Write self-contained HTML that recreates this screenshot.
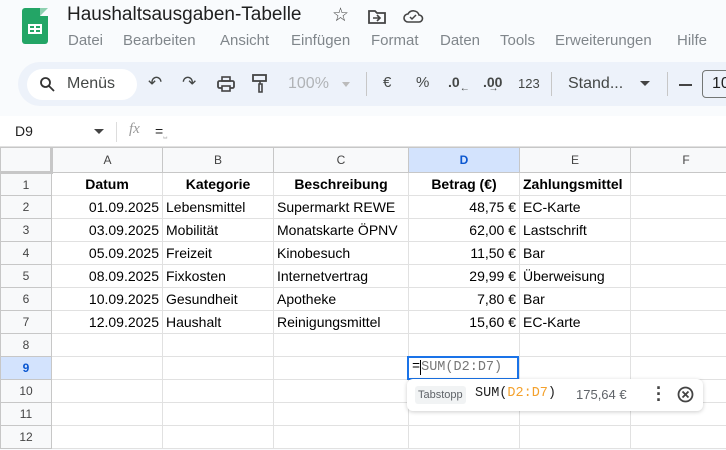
<!DOCTYPE html>
<html><head><meta charset="utf-8"><style>
*{box-sizing:border-box;margin:0;padding:0}
body{width:726px;height:450px;overflow:hidden;background:#f9fbfd;font-family:"Liberation Sans",Arial,sans-serif;position:relative}
.abs{position:absolute}
.title{left:67px;top:4px;font-size:19px;color:#1f1f1f}
.menu{top:32px;font-size:15px;color:#80868b}
.tb{left:18px;top:62px;width:740px;height:44px;background:#edf2fa;border-radius:22px}
.ic{color:#444746;font-size:15px;top:74px}
.fbar{left:0;top:116px;width:726px;height:31px;background:#fff;border-bottom:1px solid #e1e1e1}
table{position:absolute;left:0;top:147px;width:741px;border-collapse:collapse;table-layout:fixed;background:#fff;font-size:14px;color:#000}
td{border:1px solid #e1e1e1;height:23px;padding:0 3px;white-space:nowrap;overflow:hidden}
tr.h td{height:25px;background:#f8f9fa;text-align:center;color:#444;font-size:12px;border-color:#c7c7c7}
td.rh{background:#f8f9fa;text-align:center;color:#444;font-size:12px;border-color:#c7c7c7}
.r{text-align:right}.c{text-align:center}.b{font-weight:bold}
</style></head><body>
<div class="abs" style="left:22px;top:8px;width:26px;height:36px;background:#23a566;border-radius:3px"></div>
<div class="abs" style="left:40px;top:8px;width:0;height:0;border-left:8px solid #8ed1b1;border-bottom:8px solid #f9fbfd"></div>
<div class="abs" style="left:28px;top:24px;width:14px;height:10px;border:2px solid #fff;background:linear-gradient(#fff,#fff) center/2px 100% no-repeat,linear-gradient(#fff,#fff) center/100% 2px no-repeat"></div>
<div class="abs title">Haushaltsausgaben-Tabelle</div>
<div class="abs" style="left:332px;top:4px;font-size:19px;color:#444">☆</div>
<svg class="abs" style="left:367px;top:9px" width="20" height="16" viewBox="0 0 20 16"><path d="M2 2h6l2 2h8v10H2z" fill="none" stroke="#444" stroke-width="1.8"/><path d="M6 9h7M10 6l3 3-3 3" fill="none" stroke="#444" stroke-width="1.6"/></svg>
<svg class="abs" style="left:402px;top:8px" width="22" height="16" viewBox="0 0 22 16"><path d="M6 14a4 4 0 0 1 0-8 6 6 0 0 1 11 1 3.5 3.5 0 0 1 0 7z" fill="none" stroke="#444" stroke-width="1.6"/><path d="M8 9l2 2 4-4" fill="none" stroke="#444" stroke-width="1.5"/></svg>
<div class="abs menu" style="left:68px">Datei</div><div class="abs menu" style="left:123px">Bearbeiten</div><div class="abs menu" style="left:220px">Ansicht</div><div class="abs menu" style="left:291px">Einfügen</div><div class="abs menu" style="left:371px">Format</div><div class="abs menu" style="left:440px">Daten</div><div class="abs menu" style="left:500px">Tools</div><div class="abs menu" style="left:555px">Erweiterungen</div><div class="abs menu" style="left:677px">Hilfe</div>
<div class="abs tb"></div>
<div class="abs" style="left:27px;top:69px;width:110px;height:31px;background:#fff;border-radius:16px"></div>
<svg class="abs" style="left:39px;top:76px" width="16" height="16" viewBox="0 0 16 16"><circle cx="6.5" cy="6.5" r="4.5" fill="none" stroke="#333" stroke-width="1.8"/><path d="M10 10l5 5" stroke="#333" stroke-width="1.8"/></svg>
<div class="abs ic" style="left:67px;font-size:16px;top:75px">Menüs</div>
<div class="abs ic" style="left:148px;font-size:17px;top:73px">↶</div>
<div class="abs ic" style="left:182px;font-size:17px;top:73px">↷</div>
<svg class="abs" style="left:217px;top:76px" width="18" height="16" viewBox="0 0 18 16"><rect x="1" y="5" width="16" height="7" rx="1.5" fill="none" stroke="#444" stroke-width="1.8"/><rect x="5" y="1" width="8" height="4" fill="none" stroke="#444" stroke-width="1.6"/><rect x="5" y="10" width="8" height="5" fill="#edf2fa" stroke="#444" stroke-width="1.6"/></svg>
<svg class="abs" style="left:252px;top:74px" width="16" height="20" viewBox="0 0 16 20"><rect x="1" y="1" width="13" height="6" fill="none" stroke="#444" stroke-width="1.8"/><path d="M8 7v3H7v8h3v-8H8" fill="none" stroke="#444" stroke-width="1.6"/></svg>
<div class="abs ic" style="left:288px;color:#b0b3b6;font-size:16px;top:75px">100%</div>
<div class="abs" style="left:342px;top:82px;border:4px solid transparent;border-top:5px solid #bbb"></div>
<div class="abs" style="left:366px;top:72px;width:1px;height:24px;background:#c7c7c7"></div>
<div class="abs ic" style="left:383px">€</div>
<div class="abs ic" style="left:416px">%</div>
<div class="abs ic" style="left:448px;font-weight:bold;font-size:14px">.0<sub style="font-size:10px">←</sub></div>
<div class="abs ic" style="left:483px;font-weight:bold;font-size:14px">.00<sub style="font-size:10px;margin-left:-14px">→</sub></div>
<div class="abs ic" style="left:518px;font-size:13px;top:76px">123</div>
<div class="abs" style="left:551px;top:72px;width:1px;height:24px;background:#c7c7c7"></div>
<div class="abs ic" style="left:568px;font-size:16px;top:75px">Stand...</div>
<div class="abs" style="left:640px;top:81px;border:5px solid transparent;border-top:5px solid #444"></div>
<div class="abs" style="left:667px;top:72px;width:1px;height:24px;background:#c7c7c7"></div>
<div class="abs" style="left:679px;top:84px;width:13px;height:2px;background:#444"></div>
<div class="abs" style="left:702px;top:70px;width:40px;height:28px;border:1px solid #747775;border-radius:4px;font-size:16px;padding:4px 0 0 9px;color:#1f1f1f">10</div>
<div class="abs fbar"></div>
<div class="abs" style="left:15px;top:123px;font-size:14px;color:#1f1f1f">D9</div>
<div class="abs" style="left:94px;top:129px;border:5px solid transparent;border-top:5px solid #444"></div>
<div class="abs" style="left:116px;top:122px;width:1px;height:20px;background:#ddd"></div>
<div class="abs" style="left:129px;top:121px;font-size:15px;color:#999;font-style:italic;font-family:'Liberation Serif',serif">fx</div>
<div class="abs" style="left:155px;top:123px;font-size:14px;color:#1f1f1f">=<span style="color:#bbb;font-size:10px">⎵</span></div>
<table>
<colgroup><col style="width:51px"><col style="width:111px"><col style="width:111px"><col style="width:135px"><col style="width:111px"><col style="width:111px"><col style="width:111px"></colgroup>
<tr class="h"><td style="border-bottom:3px solid #c7c7c7;border-right:3px solid #c7c7c7"></td><td>A</td><td>B</td><td>C</td><td style="background:#d3e3fd;color:#0b57d0;font-weight:bold">D</td><td>E</td><td>F</td></tr>
<tr><td class="rh">1</td><td class="c b">Datum</td><td class="c b">Kategorie</td><td class="c b">Beschreibung</td><td class="c b">Betrag (€)</td><td class="b">Zahlungsmittel</td><td></td></tr>
<tr><td class="rh">2</td><td class="r">01.09.2025</td><td>Lebensmittel</td><td>Supermarkt REWE</td><td class="r">48,75 €</td><td>EC-Karte</td><td></td></tr>
<tr><td class="rh">3</td><td class="r">03.09.2025</td><td>Mobilität</td><td>Monatskarte ÖPNV</td><td class="r">62,00 €</td><td>Lastschrift</td><td></td></tr>
<tr><td class="rh">4</td><td class="r">05.09.2025</td><td>Freizeit</td><td>Kinobesuch</td><td class="r">11,50 €</td><td>Bar</td><td></td></tr>
<tr><td class="rh">5</td><td class="r">08.09.2025</td><td>Fixkosten</td><td>Internetvertrag</td><td class="r">29,99 €</td><td>Überweisung</td><td></td></tr>
<tr><td class="rh">6</td><td class="r">10.09.2025</td><td>Gesundheit</td><td>Apotheke</td><td class="r">7,80 €</td><td>Bar</td><td></td></tr>
<tr><td class="rh">7</td><td class="r">12.09.2025</td><td>Haushalt</td><td>Reinigungsmittel</td><td class="r">15,60 €</td><td>EC-Karte</td><td></td></tr>
<tr><td class="rh">8</td><td></td><td></td><td></td><td></td><td></td><td></td></tr>
<tr><td class="rh" style="background:#d3e3fd;color:#0b57d0;font-weight:bold">9</td><td></td><td></td><td></td><td></td><td></td><td></td></tr>
<tr><td class="rh">10</td><td></td><td></td><td></td><td></td><td></td><td></td></tr>
<tr><td class="rh">11</td><td></td><td></td><td></td><td></td><td></td><td></td></tr>
<tr><td class="rh">12</td><td></td><td></td><td></td><td></td><td></td><td></td></tr>
</table>
<div class="abs" style="left:407px;top:356px;width:112px;height:24px;border:2px solid #1a73e8;background:#fff;font-family:'Liberation Mono',monospace;font-size:13.5px;color:#777;padding:2px 0 0 3px"><span style="color:#000">=</span><span style="border-left:1px solid #000"></span>SUM(D2:D7)</div>
<div class="abs" style="left:407px;top:379px;width:296px;height:32px;background:#fff;border-radius:6px;box-shadow:0 1px 4px rgba(0,0,0,.2)"></div>
<div class="abs" style="left:415px;top:386px;height:18px;background:#f1f3f4;border-radius:3px;font-size:11px;color:#5f6368;padding:3px 3px">Tabstopp</div>
<div class="abs" style="left:475px;top:386px;font-family:'Liberation Mono',monospace;font-size:13.5px;color:#1f1f1f">SUM(<span style="color:#f4a12c">D2:D7</span>)</div>
<div class="abs" style="left:576px;top:387px;font-size:13px;color:#5f6368">175,64 €</div>
<div class="abs" style="left:656px;top:385px;font-size:18px;font-weight:bold;color:#444;line-height:6px;width:4px">·<br>·<br>·</div>
<svg class="abs" style="left:677px;top:386px" width="17" height="17" viewBox="0 0 17 17"><circle cx="8.5" cy="8.5" r="7" fill="none" stroke="#444" stroke-width="1.8"/><path d="M5.5 5.5l6 6M11.5 5.5l-6 6" stroke="#444" stroke-width="1.8"/></svg>
</body></html>
